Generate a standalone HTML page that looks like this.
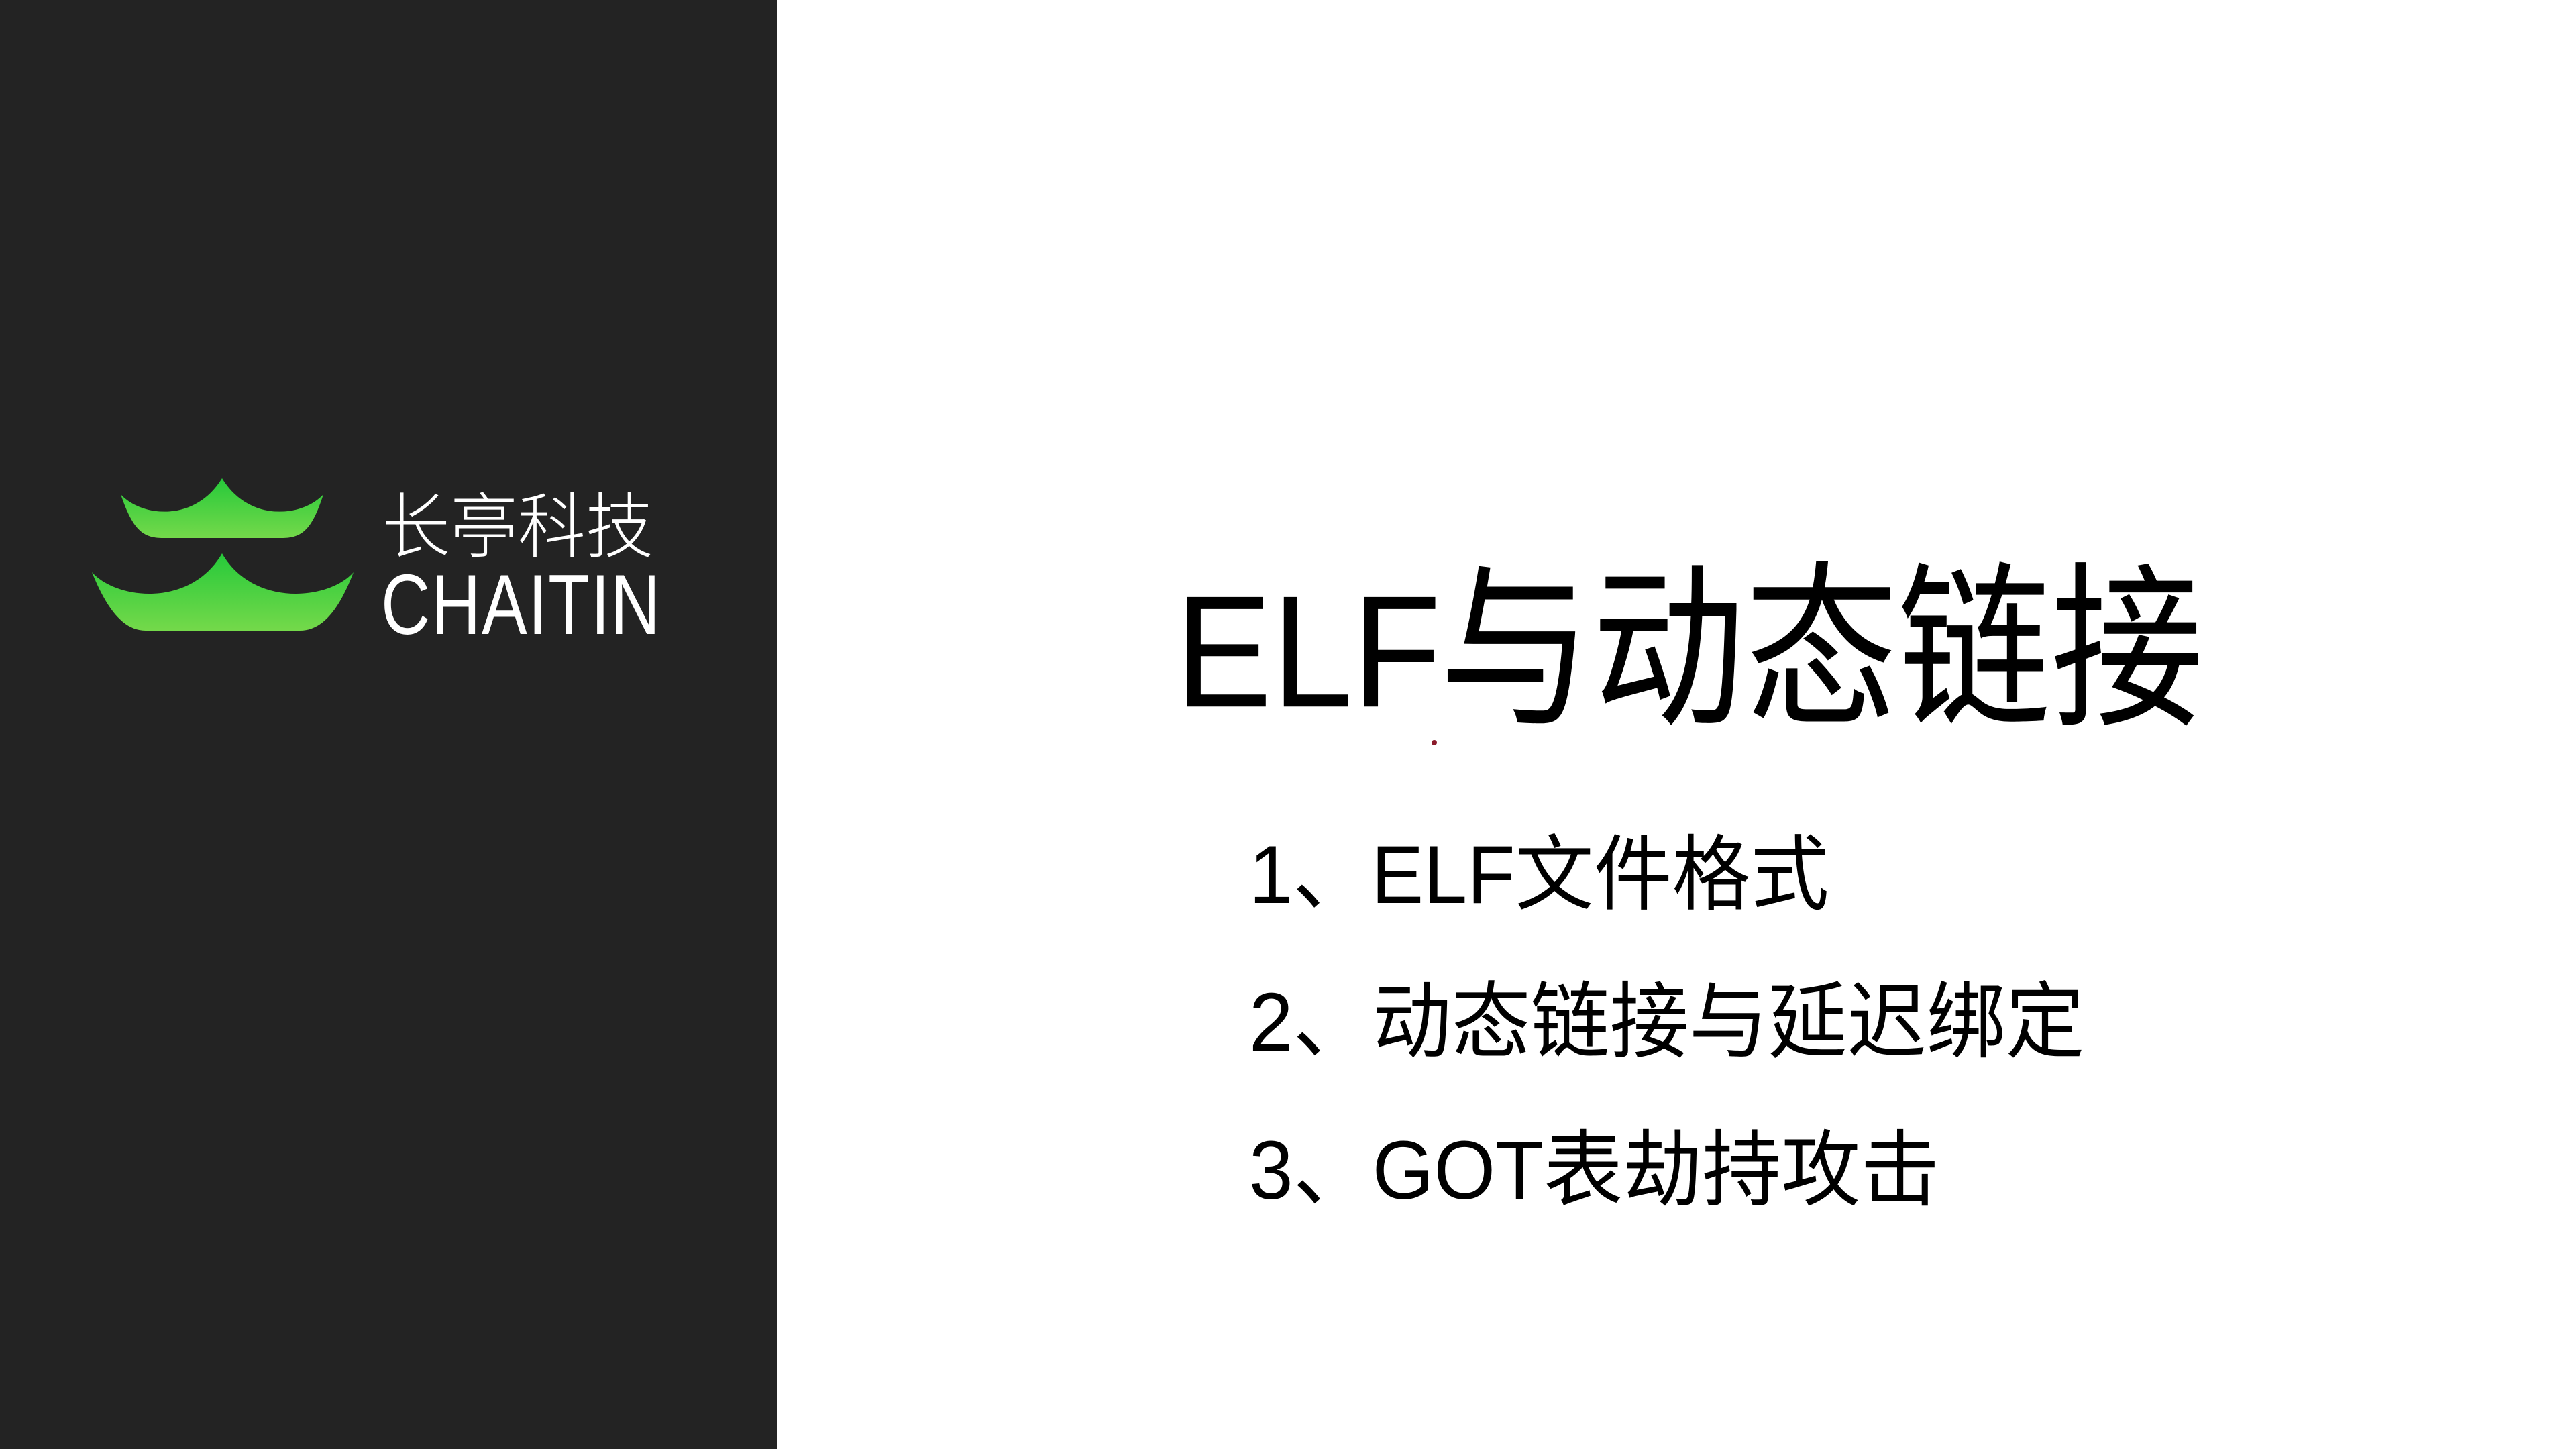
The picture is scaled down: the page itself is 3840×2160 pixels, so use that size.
<!DOCTYPE html>
<html><head><meta charset="utf-8"><style>
html,body{margin:0;padding:0;}
body{width:3840px;height:2160px;position:relative;overflow:hidden;background:#fff;}
.panel{position:absolute;left:0;top:0;width:1159px;height:2160px;background:#232323;}
.t{position:absolute;white-space:nowrap;line-height:1;font-family:"Liberation Sans","Noto Sans CJK SC",sans-serif;color:#000;transform-origin:0 0;}
.c{font-family:"Noto Sans CJK SC",sans-serif;}
</style></head><body>
<div class="panel"></div>
<svg style="position:absolute;left:0;top:0" width="1159" height="2160">
<defs><linearGradient id="g" x1="0" y1="0" x2="0" y2="1">
<stop offset="0" stop-color="#26c93a"/><stop offset="1" stop-color="#74d94a"/></linearGradient></defs>
<path fill="url(#g)" d="M180,737 C210,770 290,780 331,713 C372,780 452,770 482,737 C465,790 450,802 420,802 L243,802 C213,802 198,790 180,737Z"/>
<path fill="url(#g)" d="M137,853 C175,895 285,905 331,825 C377,905 490,895 527,853 C505,910 480,940 447,940 L217,940 C185,940 160,910 137,853Z"/>
</svg>
<div class="t c" style="left:570px;top:725px;font-size:101px;color:#fff;font-weight:300;transform:scaleY(1.05);">长亭科技</div>
<div class="t" style="left:568px;top:838px;font-size:127px;color:#fff;transform:scaleX(0.8);letter-spacing:2px;">CHAITIN</div>
<div class="t" style="left:1752px;top:852px;font-size:216px;transform:scaleY(1.1);">ELF</div>
<div class="t c" style="left:2145px;top:813px;font-size:228px;transform:scaleY(1.16);">与动态链接</div>
<div style="position:absolute;left:2134px;top:1103px;width:8px;height:8px;border-radius:50%;background:#8b1a2a;"></div>
<div class="t" style="left:1862px;top:1242px;font-size:117px;transform:scaleY(1.05);">1、ELF文件格式</div>
<div class="t" style="left:1862px;top:1462px;font-size:118px;transform:scaleY(1.05);">2、动态链接与延迟绑定</div>
<div class="t" style="left:1862px;top:1683px;font-size:118px;transform:scaleY(1.05);">3、GOT表劫持攻击</div>
</body></html>
